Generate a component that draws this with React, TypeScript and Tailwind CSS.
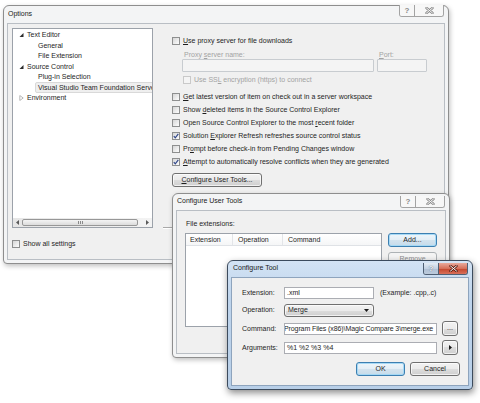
import React from "react";

const BTN =
  "flex items-center justify-center rounded-[3px] border border-[#707070] bg-[linear-gradient(#f2f2f2,#ebebeb_50%,#dddddd_50%,#cfcfcf)] shadow-[inset_0_0_0_1px_rgba(255,255,255,0.7)]";
const BTN_DEF =
  "flex items-center justify-center rounded-[3px] border border-[#3c7fb1] bg-[linear-gradient(#eef5fa,#e3eef6_50%,#d3e3ee_50%,#c6dbea)] shadow-[inset_0_0_0_1px_rgba(160,215,245,0.9)]";
const INPUT = "border border-[#abadb3] bg-white";

function Check({ on, off }: { on?: boolean; off?: boolean }) {
  return (
    <span
      className={`flex h-[8px] w-[8px] shrink-0 items-center justify-center border ${
        off
          ? "border-[#c9c9c9] bg-[#f4f4f4]"
          : "border-[#8e8f8f] bg-[linear-gradient(135deg,#d6d6d6,#fdfdfd)]"
      }`}
    >
      {on && (
        <svg width="6" height="6" viewBox="0 0 6 6">
          <path d="M0.8 3.1 L2.3 4.8 L5.3 0.9" fill="none" stroke="#30478a" strokeWidth="1.2" />
        </svg>
      )}
    </span>
  );
}

function CheckRow({
  on,
  off,
  className = "",
  children,
}: {
  on?: boolean;
  off?: boolean;
  className?: string;
  children: React.ReactNode;
}) {
  return (
    <div className={`flex items-center gap-[3px] whitespace-nowrap ${className}`}>
      <Check on={on} off={off} />
      <span className={off ? "text-[#a3a3a3]" : ""}>{children}</span>
    </div>
  );
}

function Caption({ active }: { active?: boolean }) {
  const line = active ? "border-[#4f5f73]" : "border-[#a3a3a3]";
  return (
    <div className={`flex h-[12px] shrink-0 overflow-hidden rounded-b-[3px] border border-t-0 ${line}`}>
      <div
        className={`flex w-[15px] items-center justify-center border-r ${line} ${
          active ? "bg-[linear-gradient(#e3ebf4,#c3d2e3_50%,#aebfd4_50%,#bccbdc)]" : "bg-[#f7f7f7]"
        }`}
      >
        <span className={`text-[8px] font-bold leading-none ${active ? "text-[#f4f6f9] [text-shadow:0_0_1px_#33475f]" : "text-[#8a8a8a]"}`}>
          ?
        </span>
      </div>
      <div
        className={`flex w-[28px] items-center justify-center ${
          active ? "bg-[linear-gradient(#e9a99b,#d5705a_50%,#c2432a_50%,#d9705a)]" : "bg-[#f7f7f7]"
        }`}
      >
        <svg width="9" height="7" viewBox="0 0 9 7">
          <path d="M1.5 1 L7.5 6 M7.5 1 L1.5 6" stroke={active ? "#5b1d12" : "#8a8a8a"} strokeWidth="2.4" strokeLinecap="round" />
          <path d="M1.5 1 L7.5 6 M7.5 1 L1.5 6" stroke={active ? "#ffffff" : "#f7f7f7"} strokeWidth="1" strokeLinecap="round" />
        </svg>
      </div>
    </div>
  );
}

function Win({
  title,
  active,
  pos,
  titleCls,
  children,
}: {
  title: string;
  active?: boolean;
  pos: string;
  titleCls: string;
  children: React.ReactNode;
}) {
  return (
    <div
      className={`absolute ${pos} flex flex-col rounded-t-[6px] rounded-b-[4px] border px-[3px] pb-[3px] ${
        active
          ? "border-[#3c4b5d] bg-[linear-gradient(#d3e3f4,#bed4ec_30%,#b8cfe8)] shadow-[1px_3px_7px_rgba(0,0,0,0.45)]"
          : "border-[#8e8e8e] bg-[#f3f4f5] shadow-[1px_2px_5px_rgba(0,0,0,0.25)]"
      }`}
    >
      <div className={`flex shrink-0 items-start justify-between ${titleCls}`}>
        <span className="whitespace-nowrap text-[#1a1a1a]">{title}</span>
        <div className="-mt-[var(--cap)] mr-[1px]">
          <Caption active={active} />
        </div>
      </div>
      <div className={`flex-1 border bg-[#f0f0f0] ${active ? "border-[#8ea4bd]" : "border-[#b9bec4]"}`}>{children}</div>
    </div>
  );
}

const TREE = [
  { l: 0, t: "Text Editor", exp: true },
  { l: 1, t: "General" },
  { l: 1, t: "File Extension" },
  { l: 0, t: "Source Control", exp: true },
  { l: 1, t: "Plug-in Selection" },
  { l: 1, t: "Visual Studio Team Foundation Server", sel: true },
  { l: 0, t: "Environment", exp: false },
];

function Tree() {
  return (
    <div className="flex h-[200px] w-[141px] shrink-0 flex-col overflow-hidden border border-[#9ca2aa] bg-white">
      <div className="flex flex-col pt-[1px]">
        {TREE.map((r) =>
          r.l === 0 ? (
            <div key={r.t} className="flex h-[10.5px] items-center gap-[3px] whitespace-nowrap pl-[6px]">
              <svg width="5" height="6" viewBox="0 0 5 6">
                {r.exp ? (
                  <polygon points="4.5,1 4.5,5 0.5,5" fill="#2b2b2b" />
                ) : (
                  <polygon points="0.8,0.5 4.2,3 0.8,5.5" fill="none" stroke="#a6a6a6" strokeWidth="0.8" />
                )}
              </svg>
              <span>{r.t}</span>
            </div>
          ) : (
            <div key={r.t} className={`flex h-[10.5px] items-center whitespace-nowrap ${r.sel ? "pl-[22px]" : "pl-[25px]"}`}>
              {r.sel ? (
                <span className="flex h-[11px] flex-1 items-center rounded-[2px] border border-[#d9d9d9] bg-[#efefef] pl-[2px]">
                  {r.t}
                </span>
              ) : (
                <span>{r.t}</span>
              )}
            </div>
          )
        )}
      </div>
      <div className="mt-auto flex h-[9px] items-center bg-[linear-gradient(90deg,#e6e6e6,#f3f3f3)]">
        <div className="flex w-[9px] items-center justify-center">
          <svg width="3" height="5" viewBox="0 0 3 5">
            <polygon points="3,0 3,5 0,2.5" fill="#5a5a5a" />
          </svg>
        </div>
        <div className="flex h-[7px] w-[116px] items-center justify-center rounded-[2px] border border-[#979797] bg-[linear-gradient(#f4f4f4,#dcdcdc)]">
          <div className="flex gap-[1px]">
            <span className="h-[3px] w-px bg-[#8a8a8a]" />
            <span className="h-[3px] w-px bg-[#8a8a8a]" />
            <span className="h-[3px] w-px bg-[#8a8a8a]" />
          </div>
        </div>
        <div className="flex-1" />
        <div className="flex w-[9px] items-center justify-center">
          <svg width="3" height="5" viewBox="0 0 3 5">
            <polygon points="0,0 0,5 3,2.5" fill="#5a5a5a" />
          </svg>
        </div>
      </div>
    </div>
  );
}

function Options() {
  return (
    <Win title="Options" pos="left-[3px] top-[5px] w-[446px] h-[259px] [--cap:5px]" titleCls="h-[17px] pl-[1px] pt-[4px]">
      <div className="flex flex-col px-[4px] pt-[4px]">
        <div className="flex">
          <Tree />
          <div className="ml-[10px] flex flex-1 flex-col pl-[9px]">
            <CheckRow className="mt-[8px] h-[10px]">
              <u>U</u>se proxy server for file downloads
            </CheckRow>
            <div className="ml-[10px] mt-[5px] flex text-[#a3a3a3]">
              <div className="flex w-[192px] flex-col">
                <span className="h-[8px] pl-[2px] leading-[8px]">
                  Proxy <u>s</u>erver name:
                </span>
                <div className="h-[13px] rounded-[1px] border border-[#c8ccd0] bg-[#f4f4f4]" />
              </div>
              <div className="ml-[3px] flex w-[50px] flex-col">
                <span className="h-[8px] pl-[2px] leading-[8px]">
                  <u>P</u>ort:
                </span>
                <div className="h-[13px] rounded-[1px] border border-[#c8ccd0] bg-[#f4f4f4]" />
              </div>
            </div>
            <CheckRow off className="ml-[11px] mt-[3px] h-[10px]">
              Use SS<u>L</u> encryption (https) to connect
            </CheckRow>
            <div className="mt-[5px] flex flex-col">
              <CheckRow className="h-[13px]">
                <u>G</u>et latest version of item on check out in a server workspace
              </CheckRow>
              <CheckRow className="h-[13px]">
                Show <u>d</u>eleted items in the Source Control Explorer
              </CheckRow>
              <CheckRow className="h-[13px]">
                Open Source Control Explorer to the most <u>r</u>ecent folder
              </CheckRow>
              <CheckRow on className="h-[13px]">
                Solution <u>E</u>xplorer Refresh refreshes source control status
              </CheckRow>
              <CheckRow className="h-[13px]">
                Pr<u>o</u>mpt before check-in from Pending Changes window
              </CheckRow>
              <CheckRow on className="h-[13px]">
                <u>A</u>ttempt to automatically resolve conflicts when they are generated
              </CheckRow>
            </div>
            <button className={`${BTN} mt-[5px] h-[14px] w-[90px]`}>
              <span>
                <u>C</u>onfigure User Tools...
              </span>
            </button>
            <div className="-ml-[9px] mt-[40px] h-[2px] border-t border-b border-t-[#a9a9a9] border-b-white" />
          </div>
        </div>
        <CheckRow className="mt-[10px] h-[10px]">Show all settings</CheckRow>
      </div>
    </Win>
  );
}

function UserTools() {
  return (
    <Win
      title="Configure User Tools"
      pos="left-[172px] top-[193px] w-[278px] h-[165px] [--cap:1px]"
      titleCls="h-[16px] pl-[1px] pt-[3px]"
    >
      <div className="flex flex-col pl-[8px] pt-[9px]">
        <span className="h-[8px] pl-[1px] leading-[8px]">File extensions:</span>
        <div className="mt-[5px] flex">
          <div className="flex h-[94px] w-[197px] flex-col border border-[#9ca2aa] bg-white">
            <div className="flex h-[12px] border-b border-[#dfe2e6] bg-[linear-gradient(#ffffff,#f5f6f7)]">
              <span className="flex w-[47px] items-center border-r border-[#e3e5e8] pl-[4px]">Extension</span>
              <span className="flex w-[50px] items-center border-r border-[#e3e5e8] pl-[5px]">Operation</span>
              <span className="flex items-center pl-[5px]">Command</span>
            </div>
          </div>
          <div className="ml-[6px] flex flex-col gap-[5px]">
            <button className={`${BTN_DEF} h-[14px] w-[49px]`}>Add...</button>
            <button className="flex h-[14px] w-[49px] items-center justify-center rounded-[3px] border border-[#adb2b5] bg-[#f4f4f4] text-[#8d8d8d]">
              Remove
            </button>
          </div>
        </div>
      </div>
    </Win>
  );
}

function ConfigureTool() {
  return (
    <Win
      title="Configure Tool"
      active
      pos="left-[227px] top-[260px] w-[246px] h-[130px] [--cap:1px]"
      titleCls="h-[16px] pl-[2px] pt-[3px]"
    >
      <div className="flex flex-col pl-[10px] pt-[8px]">
        <div className="flex h-[13px] items-center">
          <span className="w-[42px]">Extension:</span>
          <div className={`${INPUT} flex h-[12px] w-[90px] items-center pl-[2px]`}>.xml</div>
          <span className="ml-[6px]">(Example: .cpp,.c)</span>
        </div>
        <div className="mt-[4px] flex h-[14px] items-center">
          <span className="w-[42px]">Operation:</span>
          <div className={`${BTN} !justify-between h-[13px] w-[90px] pl-[3px] pr-[4px]`}>
            <span>Merge</span>
            <svg width="5" height="3" viewBox="0 0 5 3">
              <polygon points="0,0 5,0 2.5,3" fill="#1a1a1a" />
            </svg>
          </div>
        </div>
        <div className="mt-[4px] flex h-[15px] items-center">
          <span className="w-[42px]">Command:</span>
          <div className={`${INPUT} flex h-[12px] w-[153px] items-center overflow-hidden`}>
            <span className="-ml-[1px] whitespace-nowrap tracking-[-0.1px]">Program Files (x86)\Magic Compare 3\merge.exe</span>
          </div>
          <button className={`${BTN} ml-[5px] h-[15px] w-[16px] pb-[2px]`}>...</button>
        </div>
        <div className="mt-[4px] flex h-[15px] items-center">
          <span className="w-[42px]">Arguments:</span>
          <div className={`${INPUT} flex h-[12px] w-[153px] items-center pl-[2px]`}>%1 %2 %3 %4</div>
          <button className={`${BTN} ml-[5px] h-[15px] w-[16px]`}>
            <svg width="3" height="5" viewBox="0 0 3 5">
              <polygon points="0,0 3,2.5 0,5" fill="#1a1a1a" />
            </svg>
          </button>
        </div>
        <div className="mt-[7px] flex justify-end gap-[5px] pr-[8px]">
          <button className={`${BTN_DEF} h-[14px] w-[49px]`}>OK</button>
          <button className={`${BTN} h-[14px] w-[50px]`}>Cancel</button>
        </div>
      </div>
    </Win>
  );
}

export default function App() {
  return (
    <div className="relative h-[403px] w-[480px] overflow-hidden bg-white font-['Liberation_Sans',Arial,sans-serif] text-[7px] leading-[8px] text-[#1e1e1e]">
      <Options />
      <UserTools />
      <ConfigureTool />
    </div>
  );
}
